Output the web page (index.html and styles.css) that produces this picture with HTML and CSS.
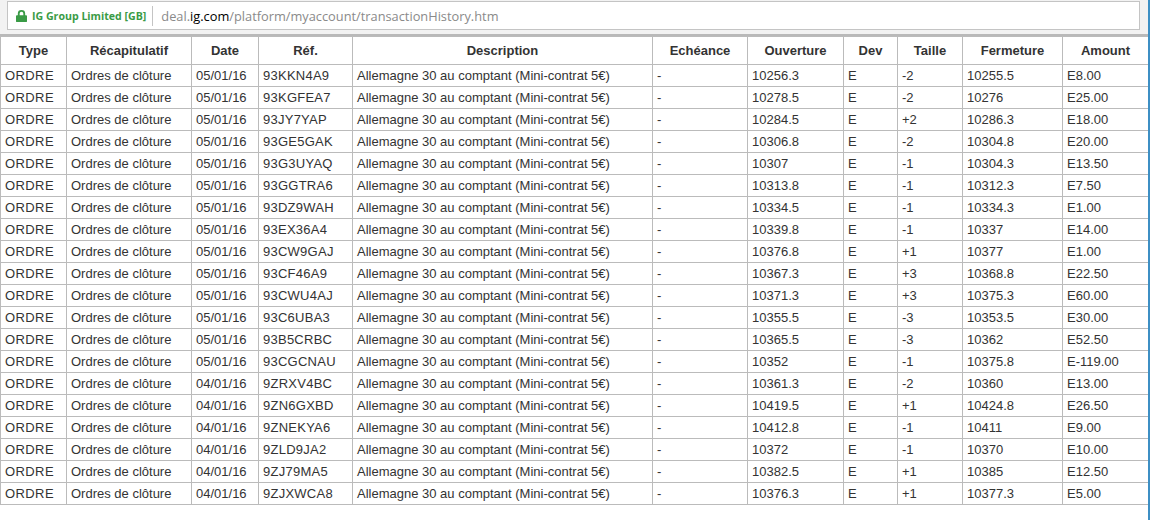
FILE: index.html
```html
<!DOCTYPE html>
<html lang="fr">
<head>
<meta charset="utf-8">
<title>Transaction History</title>
<link rel="stylesheet" href="styles.css">
</head>
<body>
<header class="toolbar">
  <div class="omnibox">
    <svg class="lock" width="11" height="12" viewBox="0 0 12 14" preserveAspectRatio="none"><path fill="#3a9b46" d="M2 6V4a4 4 0 0 1 8 0v2h1a1 1 0 0 1 1 1v6a1 1 0 0 1-1 1H1a1 1 0 0 1-1-1V7a1 1 0 0 1 1-1zm2 0h4V4a2 2 0 0 0-4 0z"/></svg>
    <span class="org">IG Group Limited [GB]</span>
    <span class="url"><span class="muted">deal.</span>ig.com<span class="muted">/platform/myaccount/transactionHistory.htm</span></span>
  </div>
</header>
<table class="tx">
  <thead>
    <tr><th class="c1">Type</th><th class="c2">Récapitulatif</th><th class="c3">Date</th><th class="c4">Réf.</th><th class="c5">Description</th><th class="c6">Echéance</th><th class="c7">Ouverture</th><th class="c8">Dev</th><th class="c9">Taille</th><th class="c10">Fermeture</th><th class="c11">Amount</th></tr>
  </thead>
  <tbody>
    <tr><td>ORDRE</td><td>Ordres de clôture</td><td>05/01/16</td><td>93KKN4A9</td><td>Allemagne 30 au comptant (Mini-contrat 5€)</td><td>-</td><td>10256.3</td><td>E</td><td>-2</td><td>10255.5</td><td>E8.00</td></tr>
    <tr><td>ORDRE</td><td>Ordres de clôture</td><td>05/01/16</td><td>93KGFEA7</td><td>Allemagne 30 au comptant (Mini-contrat 5€)</td><td>-</td><td>10278.5</td><td>E</td><td>-2</td><td>10276</td><td>E25.00</td></tr>
    <tr><td>ORDRE</td><td>Ordres de clôture</td><td>05/01/16</td><td>93JY7YAP</td><td>Allemagne 30 au comptant (Mini-contrat 5€)</td><td>-</td><td>10284.5</td><td>E</td><td>+2</td><td>10286.3</td><td>E18.00</td></tr>
    <tr><td>ORDRE</td><td>Ordres de clôture</td><td>05/01/16</td><td>93GE5GAK</td><td>Allemagne 30 au comptant (Mini-contrat 5€)</td><td>-</td><td>10306.8</td><td>E</td><td>-2</td><td>10304.8</td><td>E20.00</td></tr>
    <tr><td>ORDRE</td><td>Ordres de clôture</td><td>05/01/16</td><td>93G3UYAQ</td><td>Allemagne 30 au comptant (Mini-contrat 5€)</td><td>-</td><td>10307</td><td>E</td><td>-1</td><td>10304.3</td><td>E13.50</td></tr>
    <tr><td>ORDRE</td><td>Ordres de clôture</td><td>05/01/16</td><td>93GGTRA6</td><td>Allemagne 30 au comptant (Mini-contrat 5€)</td><td>-</td><td>10313.8</td><td>E</td><td>-1</td><td>10312.3</td><td>E7.50</td></tr>
    <tr><td>ORDRE</td><td>Ordres de clôture</td><td>05/01/16</td><td>93DZ9WAH</td><td>Allemagne 30 au comptant (Mini-contrat 5€)</td><td>-</td><td>10334.5</td><td>E</td><td>-1</td><td>10334.3</td><td>E1.00</td></tr>
    <tr><td>ORDRE</td><td>Ordres de clôture</td><td>05/01/16</td><td>93EX36A4</td><td>Allemagne 30 au comptant (Mini-contrat 5€)</td><td>-</td><td>10339.8</td><td>E</td><td>-1</td><td>10337</td><td>E14.00</td></tr>
    <tr><td>ORDRE</td><td>Ordres de clôture</td><td>05/01/16</td><td>93CW9GAJ</td><td>Allemagne 30 au comptant (Mini-contrat 5€)</td><td>-</td><td>10376.8</td><td>E</td><td>+1</td><td>10377</td><td>E1.00</td></tr>
    <tr><td>ORDRE</td><td>Ordres de clôture</td><td>05/01/16</td><td>93CF46A9</td><td>Allemagne 30 au comptant (Mini-contrat 5€)</td><td>-</td><td>10367.3</td><td>E</td><td>+3</td><td>10368.8</td><td>E22.50</td></tr>
    <tr><td>ORDRE</td><td>Ordres de clôture</td><td>05/01/16</td><td>93CWU4AJ</td><td>Allemagne 30 au comptant (Mini-contrat 5€)</td><td>-</td><td>10371.3</td><td>E</td><td>+3</td><td>10375.3</td><td>E60.00</td></tr>
    <tr><td>ORDRE</td><td>Ordres de clôture</td><td>05/01/16</td><td>93C6UBA3</td><td>Allemagne 30 au comptant (Mini-contrat 5€)</td><td>-</td><td>10355.5</td><td>E</td><td>-3</td><td>10353.5</td><td>E30.00</td></tr>
    <tr><td>ORDRE</td><td>Ordres de clôture</td><td>05/01/16</td><td>93B5CRBC</td><td>Allemagne 30 au comptant (Mini-contrat 5€)</td><td>-</td><td>10365.5</td><td>E</td><td>-3</td><td>10362</td><td>E52.50</td></tr>
    <tr><td>ORDRE</td><td>Ordres de clôture</td><td>05/01/16</td><td>93CGCNAU</td><td>Allemagne 30 au comptant (Mini-contrat 5€)</td><td>-</td><td>10352</td><td>E</td><td>-1</td><td>10375.8</td><td>E-119.00</td></tr>
    <tr><td>ORDRE</td><td>Ordres de clôture</td><td>04/01/16</td><td>9ZRXV4BC</td><td>Allemagne 30 au comptant (Mini-contrat 5€)</td><td>-</td><td>10361.3</td><td>E</td><td>-2</td><td>10360</td><td>E13.00</td></tr>
    <tr><td>ORDRE</td><td>Ordres de clôture</td><td>04/01/16</td><td>9ZN6GXBD</td><td>Allemagne 30 au comptant (Mini-contrat 5€)</td><td>-</td><td>10419.5</td><td>E</td><td>+1</td><td>10424.8</td><td>E26.50</td></tr>
    <tr><td>ORDRE</td><td>Ordres de clôture</td><td>04/01/16</td><td>9ZNEKYA6</td><td>Allemagne 30 au comptant (Mini-contrat 5€)</td><td>-</td><td>10412.8</td><td>E</td><td>-1</td><td>10411</td><td>E9.00</td></tr>
    <tr><td>ORDRE</td><td>Ordres de clôture</td><td>04/01/16</td><td>9ZLD9JA2</td><td>Allemagne 30 au comptant (Mini-contrat 5€)</td><td>-</td><td>10372</td><td>E</td><td>-1</td><td>10370</td><td>E10.00</td></tr>
    <tr><td>ORDRE</td><td>Ordres de clôture</td><td>04/01/16</td><td>9ZJ79MA5</td><td>Allemagne 30 au comptant (Mini-contrat 5€)</td><td>-</td><td>10382.5</td><td>E</td><td>+1</td><td>10385</td><td>E12.50</td></tr>
    <tr><td>ORDRE</td><td>Ordres de clôture</td><td>04/01/16</td><td>9ZJXWCA8</td><td>Allemagne 30 au comptant (Mini-contrat 5€)</td><td>-</td><td>10376.3</td><td>E</td><td>+1</td><td>10377.3</td><td>E5.00</td></tr>
  </tbody>
</table>
</body>
</html>
```
FILE: styles.css
```css
* { box-sizing: border-box; }
html, body { margin: 0; padding: 0; }
body {
  width: 1150px;
  height: 520px;
  overflow: hidden;
  background: #fff;
  border-right: 2px solid #3d8fc4;
  font-family: "Liberation Sans", Arial, sans-serif;
  color: #333;
}
.toolbar {
  height: 36px;
  padding: 1px 8px 0 7px;
  background: #f2f2f2;
  border-bottom: 2px solid #b9b9b9;
}
.omnibox {
  height: 29px;
  display: flex;
  align-items: center;
  background: #fff;
  border: 1px solid #c4c4c4;
  padding-left: 8px;
}
.lock { flex: none; margin-right: 5px; }
.org {
  font-family: "Open Sans", sans-serif;
  font-size: 10.6px;
  font-weight: 700;
  color: #3a9b46;
  padding-right: 6px;
  margin-right: 8px;
  border-right: 1px solid #c4c4c4;
  line-height: 20px;
}
.url { font-family: "Open Sans", sans-serif; font-size: 12.8px; color: #000; }
.muted { color: #8a8a8a; }
.tx {
  width: 1148px;
  border-collapse: collapse;
  table-layout: fixed;
  font-size: 13px;
}
.tx th, .tx td { border: 1px solid #bbb; padding: 0 4px; overflow: hidden; white-space: nowrap; }
.tx th { height: 28px; font-weight: 700; text-align: center; }
.tx td { height: 22px; padding-bottom: 1px; }
.tx td:nth-child(1) { letter-spacing: 0.4px; }
.tx td:nth-child(4) { letter-spacing: 0.25px; }
.c1 { width: 66px; }
.c2 { width: 125px; }
.c3 { width: 67px; }
.c4 { width: 94px; }
.c5 { width: 300px; }
.c6 { width: 95px; }
.c7 { width: 96px; }
.c8 { width: 54px; }
.c9 { width: 65px; }
.c10 { width: 100px; }
.c11 { width: 86px; }
```
